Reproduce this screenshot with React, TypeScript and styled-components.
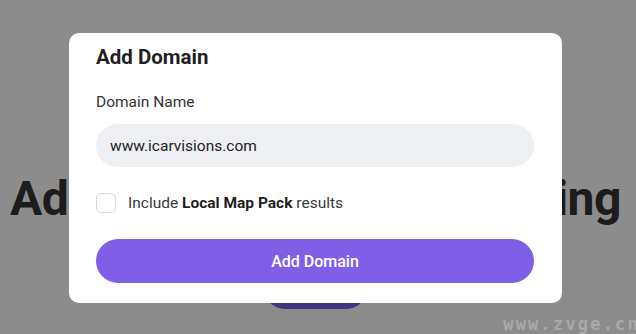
import React from 'react';
import styled, { createGlobalStyle } from 'styled-components';

const GlobalStyle = createGlobalStyle`
  html, body {
    margin: 0;
    padding: 0;
    background: #ffffff;
    font-family: Roboto, "Liberation Sans", sans-serif;
  }
  * {
    box-sizing: border-box;
  }
`;

const Page = styled.div`
  position: relative;
  width: 636px;
  height: 334px;
  overflow: hidden;
  display: flex;
  flex-direction: column;
  align-items: center;
  padding: 171px 5px 0 0;
  gap: 38px;
`;

const Hero = styled.h1`
  margin: 0;
  font-size: 48px;
  line-height: 56px;
  font-weight: 700;
  letter-spacing: -0.5px;
  color: #333333;
  white-space: nowrap;
`;

const HeroButton = styled.button`
  width: 105px;
  height: 44px;
  border: none;
  border-radius: 22px;
  background: #7f5fe8;
  color: #fff;
`;

const Overlay = styled.div`
  position: absolute;
  inset: 0;
  background: rgba(0, 0, 0, 0.45);
  display: flex;
  align-items: center;
  justify-content: center;
  padding: 2px 5px 0 0;
`;

const Modal = styled.div`
  width: 493px;
  background: #ffffff;
  border-radius: 10px;
  padding: 10px 28px 20px 27px;
  display: flex;
  flex-direction: column;
`;

const Title = styled.h2`
  margin: 0 0 21px;
  font-size: 20.5px;
  line-height: 28px;
  font-weight: 700;
  color: #1f1f1f;
`;

const Label = styled.label`
  font-size: 15.5px;
  line-height: 20px;
  color: #333333;
  margin-bottom: 12px;
`;

const Input = styled.input`
  height: 43px;
  border: none;
  outline: none;
  border-radius: 22px;
  background: #eeeff3;
  padding: 0 14px;
  font-family: Roboto, "Liberation Sans", sans-serif;
  font-size: 15.5px;
  color: #222222;
`;

const CheckRow = styled.label`
  display: flex;
  align-items: center;
  gap: 12px;
  margin: 26px 0;
  font-size: 15.5px;
  line-height: 20px;
  color: #3a3a3a;
`;

const Box = styled.span`
  width: 20px;
  height: 20px;
  border: 1px solid #d6d6dc;
  border-radius: 5px;
  background: #fff;
`;

const Strong = styled.b`
  font-weight: 700;
  color: #1f1f1f;
`;

const Submit = styled.button`
  height: 44px;
  border: none;
  border-radius: 22px;
  background: #7f5fe8;
  color: #ffffff;
  font-family: Roboto, "Liberation Sans", sans-serif;
  font-size: 16px;
  font-weight: 500;
`;

const Watermark = styled.div`
  position: absolute;
  right: -4px;
  bottom: 0;
  font-family: "DejaVu Sans Mono", monospace;
  font-weight: 700;
  font-size: 17px;
  letter-spacing: 2.2px;
  color: #a9a9a9;
`;

const App: React.FC = () => {
  return (
    <>
      <GlobalStyle />
      <Page>
        <Hero>Add Domain to Start Ranking</Hero>
        <HeroButton />
        <Overlay>
          <Modal>
            <Title>Add Domain</Title>
            <Label>Domain Name</Label>
            <Input defaultValue="www.icarvisions.com" />
            <CheckRow>
              <Box />
              <span>
                Include <Strong>Local Map Pack</Strong> results
              </span>
            </CheckRow>
            <Submit>Add Domain</Submit>
          </Modal>
        </Overlay>
        <Watermark>www.zvge.cn</Watermark>
      </Page>
    </>
  );
};

export default App;
